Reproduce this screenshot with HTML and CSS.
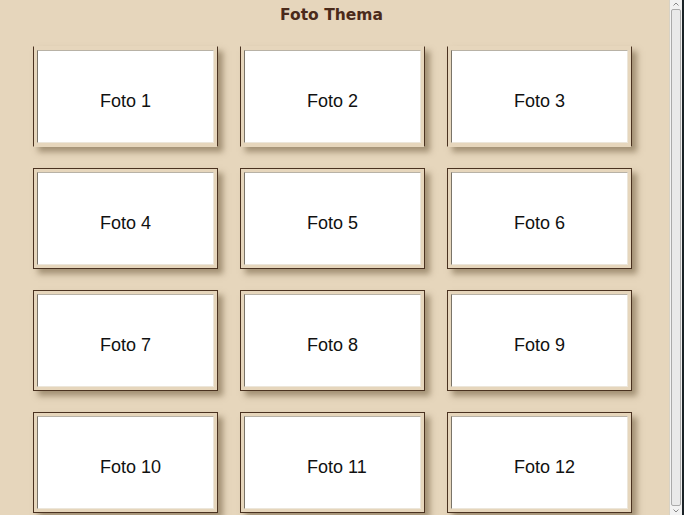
FILE: index.html
```html
<!DOCTYPE html>
<html lang="de">
<head>
    <meta charset="UTF-8">
    <meta name="viewport" content="width=device-width, initial-scale=1.0">
    <title>Foto Thema</title>
    <link rel="stylesheet" href="styles.css">
</head>
<body>
    <div class="page">
        <div class="main">
            <h1 class="titel">Foto Thema</h1>
            <div class="galerie">
                <div class="foto"><div class="bild">Foto 1</div></div>
                <div class="foto"><div class="bild">Foto 2</div></div>
                <div class="foto"><div class="bild">Foto 3</div></div>
                <div class="foto"><div class="bild">Foto 4</div></div>
                <div class="foto"><div class="bild">Foto 5</div></div>
                <div class="foto"><div class="bild">Foto 6</div></div>
                <div class="foto"><div class="bild">Foto 7</div></div>
                <div class="foto"><div class="bild">Foto 8</div></div>
                <div class="foto"><div class="bild">Foto 9</div></div>
                <div class="foto"><div class="bild">Foto 10</div></div>
                <div class="foto"><div class="bild">Foto 11</div></div>
                <div class="foto"><div class="bild">Foto 12</div></div>
            </div>
        </div>
        <div class="scrollbar">
            <svg class="pfeil" width="8" height="8" viewBox="0 0 8 8"><path d="M1.5 5.5 L4 3 L6.5 5.5" fill="none" stroke="#888" stroke-width="1"/></svg>
            <div class="thumb"></div>
            <svg class="pfeil" width="8" height="8" viewBox="0 0 8 8"><path d="M1.5 2.5 L4 5 L6.5 2.5" fill="none" stroke="#888" stroke-width="1"/></svg>
        </div>
    </div>
</body>
</html>
```

FILE: styles.css
```css
html, body {
    margin: 0;
    height: 100%;
    overflow: hidden;
}
body {
    background-color: #e6d6bc;
    font-family: "Liberation Sans", Arial, sans-serif;
}
.page {
    display: flex;
    height: 515px;
}
.main {
    flex: 1;
    overflow: hidden;
}
.titel {
    margin: 0;
    height: 46px;
    padding: 6px 6px 0 0;
    box-sizing: border-box;
    text-align: center;
    font-family: "DejaVu Sans", Verdana, sans-serif;
    font-size: 15.5px;
    font-weight: bold;
    color: #4a2a1a;
}
.galerie {
    display: grid;
    grid-template-columns: repeat(3, 185px);
    grid-auto-rows: 101px;
    column-gap: 22px;
    row-gap: 21px;
    margin-left: 33px;
}
.foto {
    box-sizing: border-box;
    border: 1px solid #4a3220;
    padding: 3px;
    background-color: #e6d6bc;
    box-shadow: 5px 5px 6px rgba(95, 75, 45, 0.5);
}
.foto:nth-child(-n+3) {
    border-top-color: #e6d6bc;
    border-bottom-color: #e6d6bc;
}
.bild {
    height: 100%;
    box-sizing: border-box;
    background-color: #fff;
    border-left: 1px solid #7a7468;
    border-top: 1px solid #b8b2a6;
    border-right: 1px solid #ece6da;
    border-bottom: 1px solid #ece6da;
    display: flex;
    align-items: center;
    padding: 10px 0 0 62px;
    font-size: 18px;
    color: #111;
}
.scrollbar {
    width: 12px;
    background-color: #f2f2f2;
    border-left: 1px solid #d8d2c4;
    border-right: 2px solid #1a2226;
    display: flex;
    flex-direction: column;
    align-items: center;
}
.pfeil {
    flex: none;
}
.thumb {
    flex: 1;
    width: 8px;
    margin: 1px 0;
    border: 1px solid #aaa;
    border-radius: 2px;
    background-color: #e9e9e9;
}
```
